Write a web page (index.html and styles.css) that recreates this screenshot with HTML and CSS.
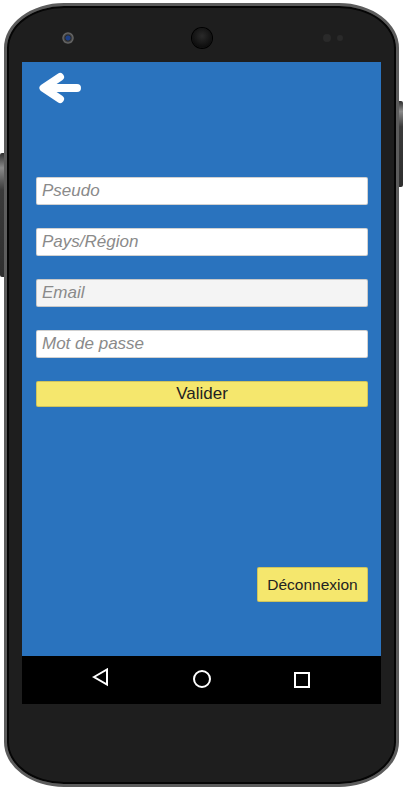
FILE: index.html
```html
<!DOCTYPE html>
<html lang="fr">
<head>
<meta charset="utf-8">
<title>Profil</title>
<link rel="stylesheet" href="styles.css">
</head>
<body>
<div class="device">
  <span class="side-btn side-left"></span>
  <span class="side-btn side-right"></span>
  <div class="top-bezel">
    <span class="camera"></span>
    <span class="speaker"></span>
    <span class="sensor sensor-a"></span>
    <span class="sensor sensor-b"></span>
  </div>
  <div class="screen">
    <div class="header">
      <svg class="back-arrow" width="50" height="40" viewBox="36 68 50 40" aria-label="Retour">
        <path d="M77 88 H45 M60 77 L43.5 88 L60 99" fill="none" stroke="#fff" stroke-width="8" stroke-linecap="round" stroke-linejoin="round"/>
      </svg>
    </div>
    <form class="form">
      <input class="field" type="text" placeholder="Pseudo">
      <input class="field" type="text" placeholder="Pays/Région">
      <input class="field field-disabled" type="text" placeholder="Email">
      <input class="field" type="password" placeholder="Mot de passe">
      <button class="btn btn-wide" type="button">Valider</button>
    </form>
    <div class="spacer"></div>
    <div class="footer">
      <button class="btn btn-logout" type="button">Déconnexion</button>
    </div>
  </div>
  <div class="navbar">
    <svg class="nav-icon" width="24" height="24" viewBox="0 0 24 24" aria-label="Retour">
      <path d="M4 9 L17 1.5 V16.5 Z" fill="none" stroke="#fff" stroke-width="2" stroke-linejoin="miter"/>
    </svg>
    <svg class="nav-icon" width="24" height="24" viewBox="0 0 24 24" aria-label="Accueil">
      <circle cx="12" cy="11" r="8" fill="none" stroke="#fff" stroke-width="2"/>
    </svg>
    <svg class="nav-icon" width="24" height="24" viewBox="0 0 24 24" aria-label="Récents">
      <rect x="5" y="5" width="14" height="14" fill="none" stroke="#fff" stroke-width="2"/>
    </svg>
  </div>
</div>
</body>
</html>
```

FILE: styles.css
```css
* {
  box-sizing: border-box;
}

html, body {
  margin: 0;
  padding: 0;
  background: #ffffff;
  overflow: hidden;
}

body {
  font-family: "Liberation Sans", Arial, sans-serif;
}

.device {
  position: relative;
  width: 395px;
  height: 784px;
  margin: 3px 0 0 4px;
  background: #1e1e1e;
  border: 3px solid #5c5c5c;
  border-radius: 60px / 45px;
  box-shadow: inset 0 0 0 2px #050505;
  display: flex;
  flex-direction: column;
  padding: 0 15px;
}

.side-btn {
  position: absolute;
  width: 4px;
  background: linear-gradient(to bottom, #2e2e2e 0%, #8a8a8a 12%, #3a3a3a 30%, #2e2e2e 100%);
}

.side-left {
  left: -7px;
  top: 147px;
  height: 124px;
  border-radius: 2px 0 0 2px;
}

.side-right {
  right: -7px;
  top: 95px;
  height: 86px;
  border-radius: 0 2px 2px 0;
}

.top-bezel {
  height: 56px;
  display: flex;
  align-items: center;
  padding-top: 8px;
  padding-left: 40px;
}

.camera {
  width: 12px;
  height: 12px;
  border-radius: 50%;
  background: radial-gradient(circle, #1d3f86 0 2px, #2a2a2a 3px, #6a6a6a 5px, #3a3a3a 6px);
}

.speaker {
  margin-left: 118px;
  width: 20px;
  height: 20px;
  border-radius: 50%;
  background: radial-gradient(circle at 50% 40%, #2a2a2a 0, #0e0e0e 70%);
  box-shadow: 0 0 0 1px #000;
}

.sensor {
  border-radius: 50%;
  background: #2a2a2a;
}

.sensor-a {
  margin-left: 111px;
  width: 8px;
  height: 8px;
}

.sensor-b {
  margin-left: 6px;
  width: 6px;
  height: 6px;
}

.screen {
  height: 594px;
  background: #2a73be;
  display: flex;
  flex-direction: column;
  padding: 0 13px 0 14px;
}

.header {
  height: 115px;
  padding-top: 6px;
}

.back-arrow {
  display: block;
}

.form {
  display: flex;
  flex-direction: column;
  gap: 23px;
  margin: 0;
}

.field {
  display: block;
  width: 100%;
  height: 28px;
  margin: 0;
  padding: 0 5px;
  border: 1px solid rgba(0, 0, 0, 0.18);
  border-radius: 2px;
  background: #ffffff;
  font-family: "Liberation Sans", Arial, sans-serif;
  font-size: 17px;
  font-style: italic;
  color: #333;
  outline: none;
}

.field::placeholder {
  color: #8a8a8a;
  font-style: italic;
}

.field-disabled {
  background: #f4f4f4;
}

.btn {
  display: block;
  margin: 0;
  border: 1px solid rgba(0, 0, 0, 0.15);
  border-radius: 2px;
  background: #f5e76d;
  color: #222;
  font-family: "Liberation Sans", Arial, sans-serif;
  padding: 0;
}

.btn-wide {
  width: 100%;
  height: 26px;
  font-size: 17px;
}

.spacer {
  flex: 1;
}

.footer {
  display: flex;
  justify-content: flex-end;
  padding-bottom: 54px;
}

.btn-logout {
  width: 111px;
  height: 35px;
  font-size: 15.5px;
}

.navbar {
  height: 48px;
  background: #000;
  display: flex;
  justify-content: center;
  align-items: center;
  gap: 76px;
  padding-left: 1px;
}

.nav-icon {
  display: block;
}
```
